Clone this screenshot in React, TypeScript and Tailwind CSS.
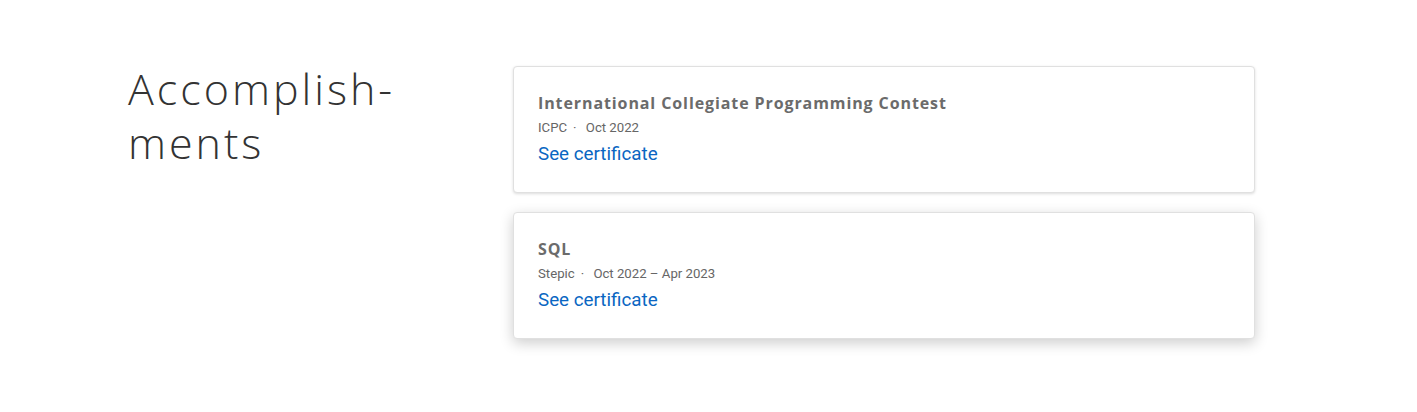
import React from 'react';

const items = [
  { title: 'International Collegiate Programming Contest', issuer: 'ICPC', date: 'Oct 2022', hover: false },
  { title: 'SQL', issuer: 'Stepic', date: 'Oct 2022 – Apr 2023', hover: true },
];

const App: React.FC = () => {
  return (
    <div className="min-h-[412px] w-full bg-white">
      <section className="flex pl-[128px] pt-[66px]">
        {/* Section title */}
        <div className="w-[385px] shrink-0">
          <h2 className="-mt-[4px] text-[43px] font-light leading-[54px] tracking-[3px] text-[#333] font-['Open_Sans',sans-serif]">
            Accomplish-
            <br />
            ments
          </h2>
        </div>

        {/* Cards */}
        <div className="flex w-[742px] flex-col gap-[19px]">
          {items.map((item, index) => (
            <div
              key={index}
              className={`h-[127px] rounded-[4px] border border-[#e0e0e0] bg-white px-6 pt-[25px] ${
                item.hover ? 'shadow-[0_4px_14px_rgba(0,0,0,0.2)]' : 'shadow-[0_1px_3px_rgba(0,0,0,0.14)]'
              }`}
            >
              <h3 className="text-[16px] font-bold leading-[22px] tracking-[0.9px] text-[#6b6b6b] font-['Open_Sans',sans-serif]">
                {item.title}
              </h3>
              <p className="mt-[6px] text-[13.2px] leading-[16px] text-[#666] font-['Roboto',sans-serif]">
                {item.issuer}
                <span className="mx-[6px]">·</span>
                {' '}
                {item.date}
              </p>
              <a className="mt-[5px] block text-[18.8px] leading-[26px] text-[#0a66c2] font-['Roboto',sans-serif]" href="#">
                See certificate
              </a>
            </div>
          ))}
        </div>
      </section>
    </div>
  );
};

export default App;
